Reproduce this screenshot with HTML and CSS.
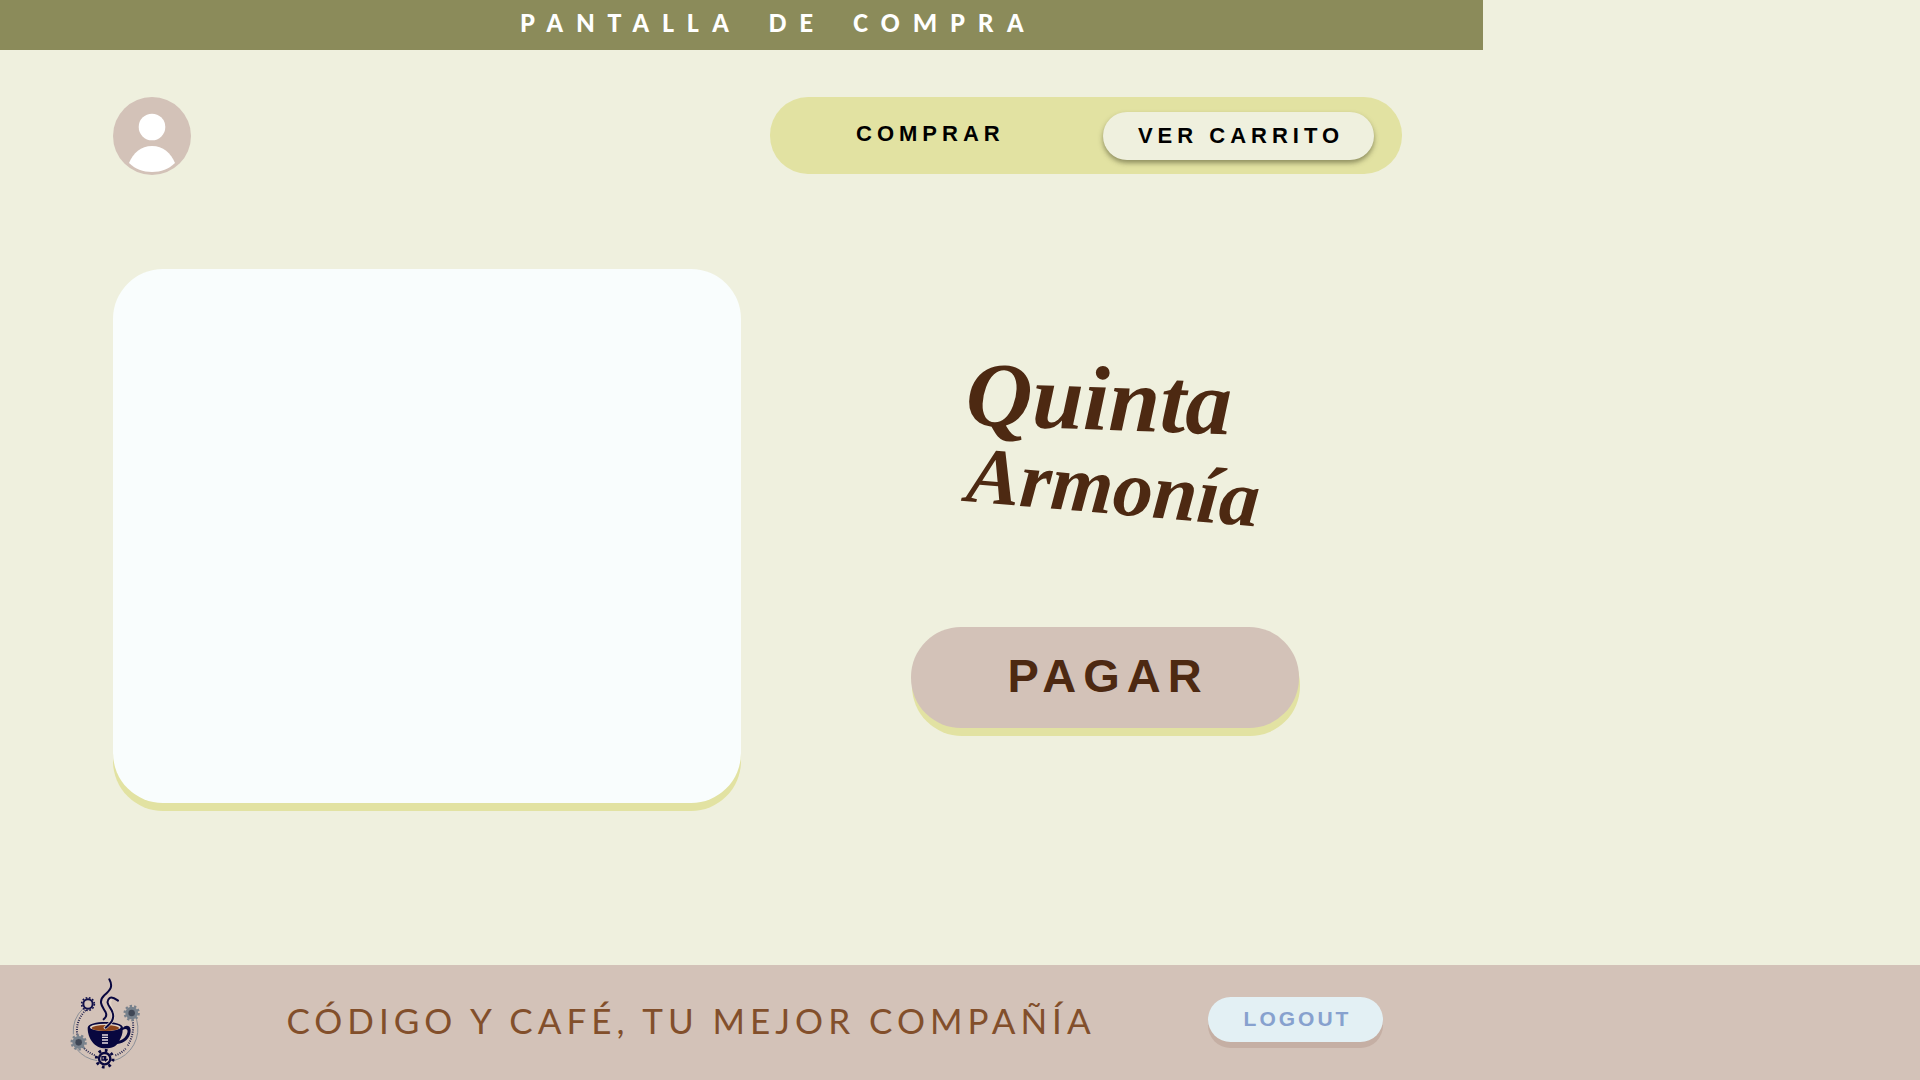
FILE: index.html
```html
<!DOCTYPE html>
<html lang="es">
<head>
<meta charset="utf-8">
<meta name="viewport" content="width=device-width, initial-scale=1">
<title>Quinta Armonía - Compra</title>
<link rel="stylesheet" href="styles.css">
</head>
<body>
<header class="title-bar"><h1 class="title">PANTALLA&ensp;DE&ensp;COMPRA</h1></header>
<main class="content">
  <div class="top-row">
    <a class="avatar" href="#perfil" aria-label="Perfil">
      <svg class="avatar-icon" viewBox="0 0 78 78" aria-hidden="true">
        <circle cx="39" cy="39" r="39" fill="#d3c2b8"/>
        <circle cx="39" cy="30" r="13.3" fill="#fff"/>
        <path d="M16 66C20 56 28 49 39 49S58 56 62 66C56 72 48 75 39 75S22 72 16 66Z" fill="#fff"/>
      </svg>
    </a>
    <nav class="menu">
      <button class="menu-item" type="button">COMPRAR</button>
      <button class="menu-item menu-active" type="button">VER CARRITO</button>
    </nav>
  </div>
  <div class="shop">
    <section class="cart" aria-label="Carrito"></section>
    <section class="checkout">
      <svg class="brand" viewBox="0 0 320 216" role="img" aria-label="Quinta Armonía">
        <text class="brand-top" x="20" y="84" transform="rotate(2 20 84)">Quinta</text>
        <text class="brand-bottom" x="20" y="160" transform="rotate(5 20 160)">Armonía</text>
      </svg>
      <button class="pay" type="button">PAGAR</button>
    </section>
  </div>
</main>
<footer class="footer">
  <svg class="cafe-logo" viewBox="0 0 270 345" aria-hidden="true">
    <g fill="none" stroke="#8c9098" stroke-width="3">
      <path d="M70 130A96 96 0 0 0 40 208M48 250A99 99 0 0 0 112 287"/>
      <path d="M230 164A100 100 0 0 1 162 287"/>
    </g>
    <g fill="none" stroke="#252650" stroke-width="6" stroke-dasharray="3 4">
      <path d="M77 136A82 82 0 0 0 52 210M68 245Q84 264 108 272M166 271Q184 265 197 251M218 165Q225 207 201 245"/>
    </g>
    <g fill="none" stroke="#11104a">
      <circle cx="84" cy="117" r="14" stroke-width="6"/>
      <circle cx="84" cy="117" r="19" stroke-width="5" stroke-dasharray="5 5"/>
    </g>
    <g fill="none" stroke="#77818c">
      <circle cx="215" cy="144" r="14" stroke-width="10"/>
      <circle cx="215" cy="144" r="21" stroke-width="7" stroke-dasharray="7 6.2"/>
      <circle cx="56" cy="232" r="14" stroke-width="10"/>
      <circle cx="56" cy="232" r="21" stroke-width="7" stroke-dasharray="7 6.2"/>
    </g>
    <g fill="#3f4756"><circle cx="215" cy="144" r="10"/><circle cx="56" cy="232" r="10"/></g>
    <g fill="none" stroke="#08073f">
      <circle cx="134" cy="281" r="17" stroke-width="7"/>
      <circle cx="134" cy="281" r="25" stroke-width="9" stroke-dasharray="8 11.6"/>
      <path d="M126 275h7v10h-7zM137 273v14l6-5" stroke-width="4"/>
    </g>
    <path d="M83 188C83 165 189 165 189 188C195 179 212 179 212 196C212 220 192 236 172 237C164 246 154 250 137 250C103 250 83 220 83 188Z" fill="#08073f"/>
    <path d="M188 195C202 187 207 198 199 211C193 221 185 226 178 227C184 217 188 206 188 195Z" fill="#d3c2b8"/>
    <ellipse cx="136" cy="187" rx="46" ry="11" fill="#e3d4c6"/>
    <ellipse cx="136" cy="189" rx="41" ry="9" fill="#8b431b"/>
    <path d="M126 210h18M126 217h18M126 225h18M126 234h18" stroke="#e6dce0" stroke-width="4"/>
    <g fill="none" stroke="#e3d4c6" stroke-width="10" stroke-linecap="round">
      <path d="M136 188C153 174 164 163 158 143C154 128 143 118 151 106"/>
    </g>
    <g fill="none" stroke="#08073f" stroke-width="6" stroke-linecap="round" stroke-linejoin="round">
      <path d="M148 43C160 65 151 75 133 91C112 111 129 127 137 142C141 150 138 157 131 163"/>
      <path d="M137 188C153 174 164 163 158 143C154 128 132 113 149 99C157 93 166 101 174 107"/>
    </g>
  </svg>
  <p class="slogan">CÓDIGO Y CAFÉ, TU MEJOR COMPAÑÍA</p>
  <button class="logout" type="button">LOGOUT</button>
</footer>
</body>
</html>
```
FILE: styles.css
```css
* {
  box-sizing: border-box;
}

body {
  --side: 437px;
  margin: 0;
  min-height: 100vh;
  display: flex;
  flex-direction: column;
  background: #eff0de;
  font-family: "Liberation Sans", Arial, sans-serif;
}

button {
  border: 0;
  padding: 0;
  font-family: inherit;
  font-weight: 700;
  cursor: pointer;
}

.title-bar {
  margin-right: var(--side);
  padding: 8px 0 12px 74px;
  background: #8b8b5a;
  text-align: center;
}

.title {
  margin: 0;
  color: #fff;
  font: 700 28px/30px Carlito, "Open Sans", sans-serif;
  letter-spacing: 13px;
}

.content {
  flex: 1;
  margin-right: var(--side);
  padding: 47px 81px 48px 113px;
}

.top-row {
  display: flex;
  justify-content: space-between;
  margin-bottom: 94px;
}

.avatar,
.avatar-icon {
  display: block;
  width: 78px;
  height: 78px;
}

.menu {
  display: flex;
  align-items: center;
  justify-content: space-between;
  width: 632px;
  height: 77px;
  padding: 0 28px 0 68px;
  border-radius: 38px;
  background: #e2e2a2;
}

.menu-item {
  height: 48px;
  padding: 0 16px 4px 18px;
  border-radius: 24px;
  background: none;
  color: #000;
  font-size: 22px;
  letter-spacing: 5px;
}

.menu-active {
  width: 271px;
  padding: 0 0 0 5px;
  background: #eff0de;
  box-shadow: 0 3px 5px rgba(60, 60, 30, 0.5);
}

.shop {
  display: grid;
  grid-template-columns: 628px 1fr;
}

.cart {
  height: 534px;
  border-radius: 50px;
  background: #f9fdfd;
  box-shadow: 0 8px 0 #e2e2a2;
}

.checkout {
  display: flex;
  flex-direction: column;
  align-items: center;
  gap: 70px;
  padding: 72px 0 0 67px;
}

.brand {
  width: 320px;
  height: 216px;
  fill: #4d2912;
  font-family: "Brush Script MT", "Liberation Serif", cursive;
  font-style: italic;
  font-weight: 700;
}

.brand-top {
  font-size: 92px;
}

.brand-bottom {
  font-size: 80px;
}

.pay {
  width: 388px;
  height: 101px;
  padding: 0 0 4px 6px;
  border-radius: 50px;
  background: #d3c2b8;
  box-shadow: 1px 8px 0 #e2e2a2;
  color: #4d2912;
  font-size: 47px;
  letter-spacing: 7px;
}

.footer {
  display: flex;
  align-items: center;
  min-height: 115px;
  padding: 0 537px 0 60px;
  background: #d3c2b8;
}

.cafe-logo {
  width: 90px;
  height: 115px;
}

.slogan {
  margin: 0 auto;
  padding: 0 0 6px 24px;
  color: #824f2b;
  font: 400 35px/44px Lato, sans-serif;
  letter-spacing: 5px;
  white-space: nowrap;
}

.logout {
  width: 175px;
  height: 45px;
  margin-bottom: 6px;
  padding: 0 0 2px 4px;
  border-radius: 23px;
  background: #e3f0f4;
  box-shadow: 0 6px 0 #c5afa4;
  color: #87a1ce;
  font-size: 21px;
  letter-spacing: 3px;
}
```
